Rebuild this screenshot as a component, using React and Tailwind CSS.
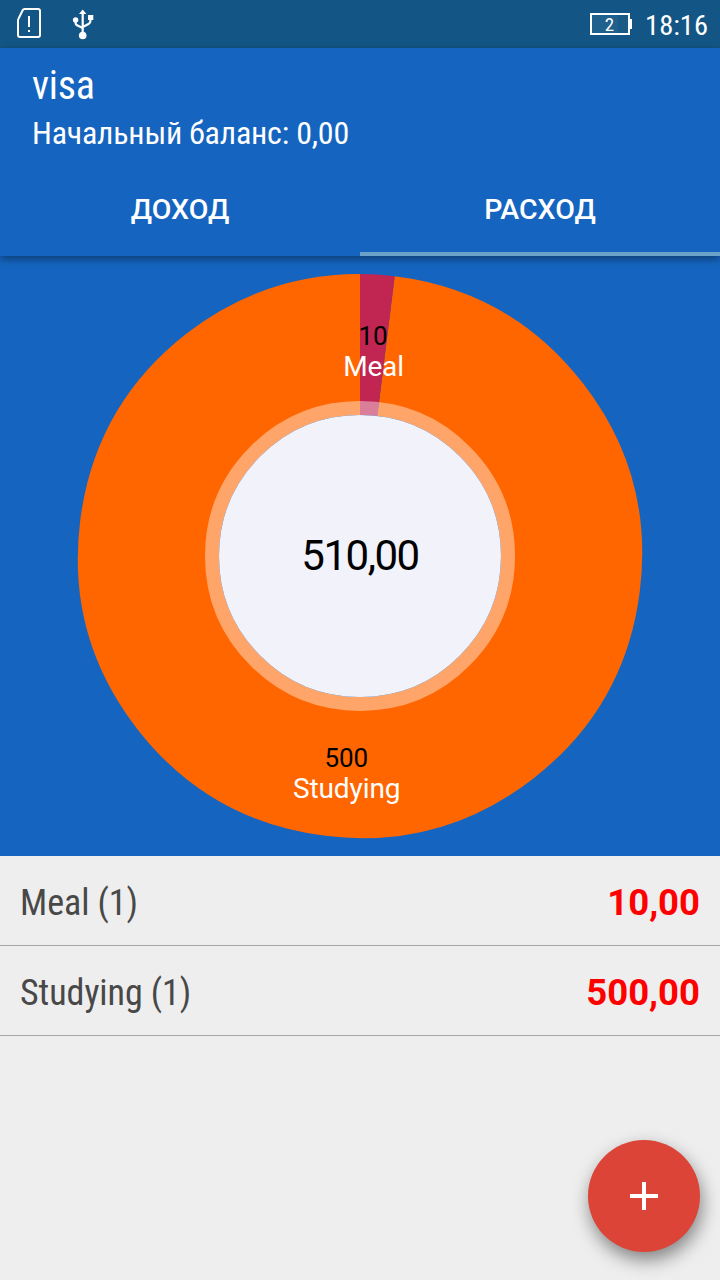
import React from 'react';

const categories = [
  { name: 'Meal', count: 1, value: 10, amount: '10,00' },
  { name: 'Studying', count: 1, value: 500, amount: '500,00' },
];

const tabs = ['ДОХОД', 'РАСХОД'];

const condensed = "font-['Roboto_Condensed',Roboto,sans-serif] [font-stretch:75%] whitespace-nowrap";

function StatusBar() {
  return (
    <div className="h-12 bg-[#135685] flex items-center justify-between pl-4 pr-3 text-white">
      <div className="flex items-center h-full">
        <svg width="26" height="32" viewBox="0 0 26 32" fill="none" stroke="white" strokeWidth="2" strokeLinejoin="round">
          <path d="M8.500 1H22Q24 1 24 3V27Q24 29 22 29H4Q2 29 2 27V12.500Q2 11.500 2.600 10.500L6.800 2Q7.300 1 8.500 1Z" />
          <path d="M13 8V19M13 22V24" />
        </svg>
        <svg className="ml-[30px]" width="22" height="32" viewBox="0 0 22 32" fill="none" stroke="white" strokeWidth="2.2">
          <circle cx="10.7" cy="27.5" r="3.8" fill="white" stroke="none" />
          <path d="M10.700 28V4M3.600 12V15Q3.600 16.500 5 17.200L10.700 20M18.400 10V13Q18.400 15 16.500 16L10.700 19" />
          <path d="M7 6L10.700 1.500L14.400 6Z" fill="white" stroke="none" />
          <circle cx="3.600" cy="12" r="2.700" fill="white" stroke="none" />
          <path d="M16 7H21.300V12H16Z" fill="white" stroke="none" />
        </svg>
      </div>
      <div className="flex items-center">
        <div className={`w-10 h-[22px] border-2 border-white bg-[linear-gradient(90deg,#20608d_72%,#1a5a86_72%)] flex items-center justify-center pt-px pr-px text-[19px] leading-none ${condensed}`}>2</div>
        <div className="w-[2px] h-[10px] bg-white" />
        <div className={`ml-[13px] pt-[4px] text-[28.5px] leading-[44px] ${condensed}`}>18:16</div>
      </div>
    </div>
  );
}

function Header() {
  return (
    <header className="relative h-52 bg-[#1565c0] text-white shadow-[0_3px_8px_rgba(0,0,0,0.4)]">
      <div className="h-28 pl-8 pt-[14px]">
        <h1 className={`text-[40px] leading-[47px] tracking-[-0.25px] ${condensed}`}>visa</h1>
        <p className={`pt-px text-[32px] leading-[47px] tracking-[-0.19px] ${condensed}`}>Начальный баланс: 0,00</p>
      </div>
      <nav className="h-24 grid grid-cols-2">
        {tabs.map((tab, i) => (
          <button key={tab} className={`text-[28.5px] font-medium border-b-4 pt-[9px] ${i === 1 ? 'border-[#6ba2c9]' : 'border-transparent'}`}>
            {tab}
          </button>
        ))}
      </nav>
    </header>
  );
}

// Arc built from quadratic curves, 45 degrees at most each; angles run clockwise from the top
function arcPath(r, start, end) {
  const point = (deg, radius) => {
    const a = (deg * Math.PI) / 180;
    return `${360 + radius * Math.sin(a)} ${300 - radius * Math.cos(a)}`;
  };
  let d = `M${point(start, r)}`;
  for (let a = start; a < end; a += 45) {
    const next = Math.min(a + 45, end);
    const half = (next - a) / 2;
    d += `Q${point(a + half, r / Math.cos((half * Math.PI) / 180))} ${point(next, r)}`;
  }
  return d;
}

function DonutChart() {
  const total = categories.reduce((sum, c) => sum + c.value, 0);
  const split = (categories[0].value / total) * 360;

  return (
    <svg className="block" width="720" height="600" viewBox="0 0 720 600" textAnchor="middle">
      <path d={`${arcPath(282, split, 360)}L360 300Z`} fill="#ff6600" />
      <path d={`${arcPath(282, 0, split)}L360 300Z`} fill="#c12552" />
      <path d={arcPath(155, 0, 360)} fill="white" fillOpacity="0.41" />
      <path d={arcPath(141, 0, 360)} fill="#1565c0" />
      <path d={arcPath(141, 0, 360)} fill="#f1f2fa" />
      <text x="373" y="89" fontSize="26">10</text>
      <text x="373.500" y="120" fontSize="28" letterSpacing="-0.2" fill="white">Meal</text>
      <text x="360" y="314" fontSize="42" letterSpacing="-1.5">510,00</text>
      <text x="346.300" y="511" fontSize="26">500</text>
      <text x="346.700" y="542" fontSize="28" letterSpacing="-0.1" fill="white">Studying</text>
    </svg>
  );
}

export default function App() {
  return (
    <div className="relative w-[720px] h-[1280px] overflow-hidden bg-[#eeeeee] font-[Roboto,sans-serif]">
      <StatusBar />
      <Header />
      <div className="bg-[#1565c0]">
        <DonutChart />
      </div>
      <ul>
        {categories.map((c) => (
          <li key={c.name} className="h-[90px] px-5 pt-[5px] flex items-center justify-between border-b border-[#a6a6a6]">
            <span className={`text-4xl tracking-[-0.05px] text-[#484848] ${condensed}`}>{c.name} ({c.count})</span>
            <span className="text-[36.5px] leading-10 font-bold text-[#ff0000]">{c.amount}</span>
          </li>
        ))}
      </ul>

      {/* Floating add button */}
      <button className="absolute right-5 bottom-7 size-28 rounded-full bg-[#db4437] flex items-center justify-center shadow-[2px_8px_18px_rgba(0,0,0,0.45)]">
        <svg width="28" height="28" viewBox="0 0 28 28" fill="white">
          <path d="M12 0H16V12H28V16H16V28H12V16H0V12H12Z" />
        </svg>
      </button>
    </div>
  );
}
